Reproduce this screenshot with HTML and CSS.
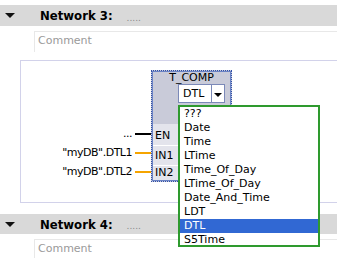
FILE: index.html
```html
<!DOCTYPE html>
<html>
<head>
<meta charset="utf-8">
<link rel="stylesheet" href="styles.css">
</head>
<body>
<div class="net-head net-head-first">
  <span class="tri"></span>
  <span class="net-title">Network 3:</span>
  <span class="dots">.....</span>
</div>
<div class="comment">Comment</div>

<div class="net-body">
  <div class="fbd">
    <div class="inputs">
      <div class="in-row"><span class="lbl">...</span><span class="wire wire-bool"></span></div>
      <div class="in-row"><span class="lbl">"myDB".DTL1</span><span class="wire"></span></div>
      <div class="in-row"><span class="lbl">"myDB".DTL2</span><span class="wire"></span></div>
    </div>
    <div class="block">
      <div class="block-title">T_COMP</div>
      <div class="type-box">
        <span class="type-val">DTL</span>
        <span class="type-btn"><span class="arrow"></span></span>
      </div>
      <div class="pins">
        <div class="pin pin-en">EN</div>
        <div class="pin pin-in1">IN1</div>
        <div class="pin pin-in2">IN2</div>
      </div>
    </div>
  </div>
  <ul class="dropdown">
    <li>???</li>
    <li>Date</li>
    <li>Time</li>
    <li>LTime</li>
    <li>Time_Of_Day</li>
    <li>LTime_Of_Day</li>
    <li>Date_And_Time</li>
    <li>LDT</li>
    <li class="selected">DTL</li>
    <li>S5Time</li>
  </ul>
</div>

<div class="net-head net-head-second">
  <span class="tri"></span>
  <span class="net-title">Network 4:</span>
  <span class="dots">.....</span>
</div>
<div class="comment">Comment</div>
</body>
</html>
```
FILE: styles.css
```css
html, body {
  margin: 0;
  padding: 0;
  background: #ffffff;
}
body {
  font-family: "DejaVu Sans", sans-serif;
  font-size: 11px;
  color: #000;
  overflow: hidden;
}
.net-head {
  display: flex;
  align-items: center;
  height: 21px;
  background: #d9d9d9;
  padding-left: 5px;
}
.net-head-first {
  margin-top: 5px;
}
.net-head-second {
  margin-top: 11px;
  height: 20px;
}
.tri {
  width: 0;
  height: 0;
  border-left: 5px solid transparent;
  border-right: 5px solid transparent;
  border-top: 5px solid #111;
}
.net-title {
  margin-left: 25px;
  font-family: "DejaVu Sans Condensed", "DejaVu Sans", sans-serif;
  font-weight: bold;
  font-size: 13px;
}
.dots {
  margin-left: 14px;
  color: #888;
  font-size: 9px;
  margin-top: 4px;
}
.comment {
  margin-left: 34px;
  margin-top: 5px;
  height: 20px;
  border-top: 1px solid #e8e8e8;
  border-left: 1px solid #e8e8e8;
  padding-left: 3px;
  line-height: 17px;
  color: #9a9a9a;
}
.net-body {
  position: relative;
  margin-left: 20px;
  margin-top: 8px;
  height: 143px;
  box-sizing: border-box;
  border: 1px solid #d2d2ea;
  border-right: none;
}
.fbd {
  display: flex;
  align-items: flex-start;
}
.inputs {
  width: 130px;
  padding-top: 63px;
  display: flex;
  flex-direction: column;
}
.in-row {
  display: flex;
  justify-content: flex-end;
  align-items: flex-start;
  height: 19px;
}
.lbl {
  line-height: 19px;
  margin-right: 3px;
  white-space: nowrap;
  letter-spacing: -0.5px;
}
.wire {
  width: 16px;
  height: 2px;
  margin-top: 9px;
  background: #f5a400;
}
.wire-bool {
  background: #000;
}
.block {
  margin-top: 9px;
  width: 81px;
  height: 112px;
  box-sizing: border-box;
  border: 1px dotted #2f4fa8;
  outline: 1px solid #6a82c4;
  outline-offset: -2px;
  background: #c9cbd9;
  display: flex;
  flex-direction: column;
}
.block-title {
  height: 13px;
  line-height: 13px;
  text-align: center;
}
.type-box {
  margin-left: 26px;
  width: 47px;
  height: 19px;
  box-sizing: border-box;
  border: 1px solid #7b89b8;
  background: #fff;
  display: flex;
}
.type-val {
  width: 33px;
  box-sizing: border-box;
  padding-left: 4px;
  line-height: 17px;
  border-right: 1px solid #7b89b8;
}
.type-btn {
  flex: 1;
  display: flex;
  align-items: center;
  justify-content: center;
}
.arrow {
  width: 0;
  height: 0;
  border-left: 4px solid transparent;
  border-right: 4px solid transparent;
  border-top: 4px solid #000;
  margin-top: 2px;
}
.pins {
  margin-top: 21px;
  width: 25px;
  display: flex;
  flex-direction: column;
  background: #e3e4ec;
  margin-left: 1px;
}
.pin {
  padding-left: 2px;
}
.pin-en {
  height: 22px;
  line-height: 20px;
  padding-top: 2px;
  box-sizing: border-box;
  border-bottom: 1px solid #fff;
}
.pin-in1 {
  height: 20px;
  line-height: 18px;
  padding-top: 1px;
  box-sizing: border-box;
  border-bottom: 1px solid #fff;
}
.pin-in2 {
  height: 14px;
  line-height: 14px;
}
.dropdown {
  position: absolute;
  left: 157px;
  top: 44px;
  width: 142px;
  height: 142px;
  box-sizing: border-box;
  margin: 0;
  padding: 0;
  list-style: none;
  background: #fff;
  border: 2px solid #2e9a2e;
  overflow: hidden;
}
.dropdown li {
  height: 14px;
  line-height: 14px;
  padding-left: 4px;
  white-space: nowrap;
}
.dropdown li.selected {
  background: #3168d3;
  color: #fff;
}
```
